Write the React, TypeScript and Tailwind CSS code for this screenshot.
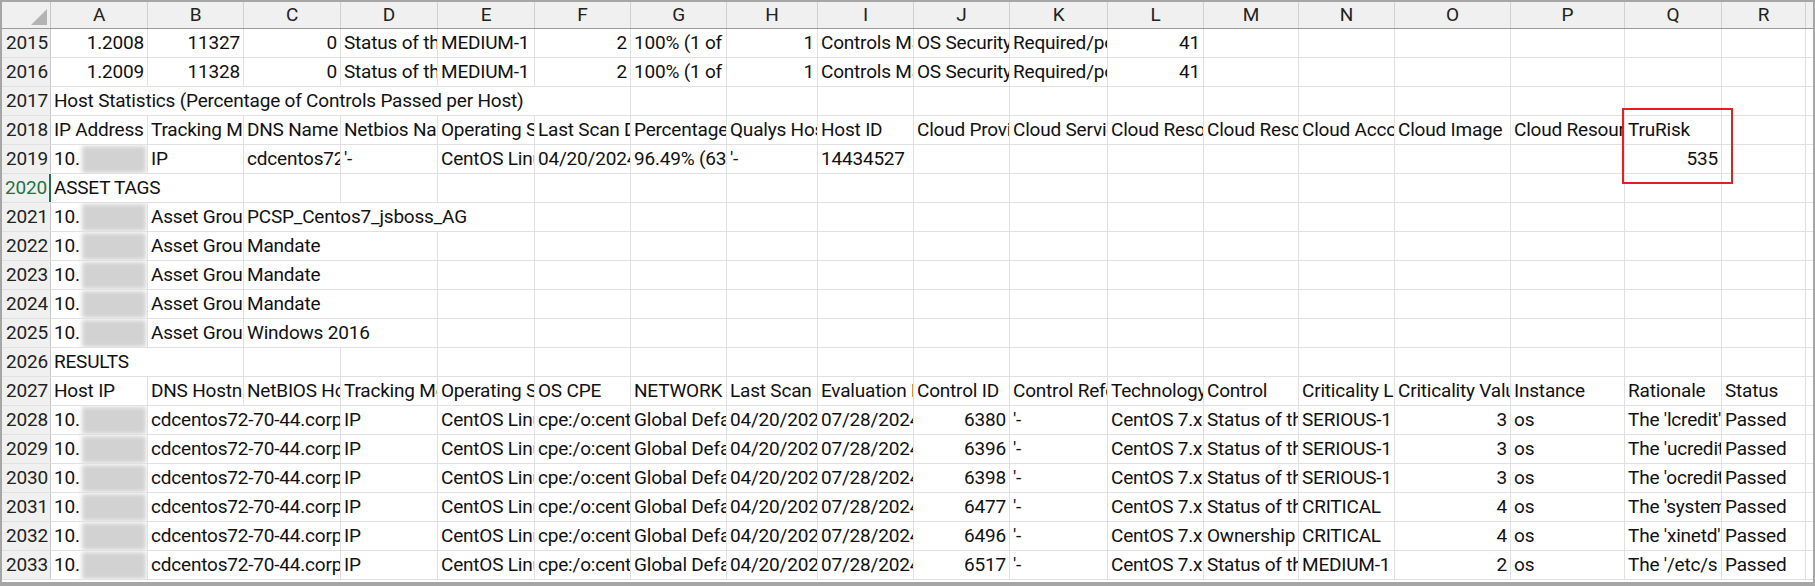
import React from "react";

const W = [97, 96, 97, 97, 97, 96, 96, 91, 96, 96, 98, 96, 95, 96, 116, 114, 97, 84];
const COLS = "ABCDEFGHIJKLMNOPQR".split("");

type C = { t?: string; r?: boolean; s?: number; ip?: boolean };
const L = (t: string, s = 1): C => ({ t, s });
const R = (t: string): C => ({ t, r: true });
const E: C = {};
const IP: C = { ip: true };

const fill = (cells: C[]) => {
  const used = cells.reduce((a, c) => a + (c.s || 1), 0);
  const out = [...cells];
  for (let i = used; i < 18; i++) out.push(E);
  return out;
};

const res = (cid: string, ctl: string, crit: string, cv: string, rat: string): C[] => [
  IP,
  L("cdcentos72-70-44.corp", 2),
  L("IP"),
  L("CentOS Linux 7"),
  L("cpe:/o:centos"),
  L("Global Default"),
  L("04/20/2024"),
  L("07/28/2024"),
  R(cid),
  L("'-"),
  L("CentOS 7.x"),
  L(ctl),
  L(crit),
  R(cv),
  L("os"),
  L(rat),
  L("Passed"),
];

const rows: [string, C[]][] = [
  ["2015", [R("1.2008"), R("11327"), R("0"), L("Status of the"), L("MEDIUM-1"), R("2"), L("100% (1 of 1)"), R("1"), L("Controls Mapped"), L("OS Security"), L("Required/policy"), R("41")]],
  ["2016", [R("1.2009"), R("11328"), R("0"), L("Status of the"), L("MEDIUM-1"), R("2"), L("100% (1 of 1)"), R("1"), L("Controls Mapped"), L("OS Security"), L("Required/policy"), R("41")]],
  ["2017", [L("Host Statistics (Percentage of Controls Passed per Host)", 6)]],
  ["2018", [L("IP Address"), L("Tracking Method"), L("DNS Name"), L("Netbios Name"), L("Operating System"), L("Last Scan Date"), L("Percentage"), L("Qualys Host ID"), L("Host ID"), L("Cloud Provider"), L("Cloud Service"), L("Cloud Resource"), L("Cloud Resource"), L("Cloud Account"), L("Cloud Image"), L("Cloud Resource"), L("TruRisk")]],
  ["2019", [IP, L("IP"), L("cdcentos72"), L("'-"), L("CentOS Linux"), L("04/20/2024"), L("96.49% (63 of)"), L("'-"), L("14434527"), E, E, E, E, E, E, E, R("535")]],
  ["2020", [L("ASSET TAGS", 2)]],
  ["2021", [IP, L("Asset Group"), L("PCSP_Centos7_jsboss_AG", 3)]],
  ["2022", [IP, L("Asset Group"), L("Mandate", 2)]],
  ["2023", [IP, L("Asset Group"), L("Mandate", 2)]],
  ["2024", [IP, L("Asset Group"), L("Mandate", 2)]],
  ["2025", [IP, L("Asset Group"), L("Windows 2016", 2)]],
  ["2026", [L("RESULTS", 2)]],
  ["2027", [L("Host IP"), L("DNS Hostname"), L("NetBIOS Hostname"), L("Tracking Method"), L("Operating System"), L("OS CPE"), L("NETWORK"), L("Last Scan Date"), L("Evaluation Date"), L("Control ID"), L("Control References"), L("Technology"), L("Control"), L("Criticality Label"), L("Criticality Value"), L("Instance"), L("Rationale"), L("Status")]],
  ["2028", res("6380", "Status of the", "SERIOUS-1", "3", "The 'lcredit'")],
  ["2029", res("6396", "Status of the", "SERIOUS-1", "3", "The 'ucredit'")],
  ["2030", res("6398", "Status of the", "SERIOUS-1", "3", "The 'ocredit'")],
  ["2031", res("6477", "Status of the", "CRITICAL", "4", "The 'systemd'")],
  ["2032", res("6496", "Ownership", "CRITICAL", "4", "The 'xinetd'")],
  ["2033", res("6517", "Status of the", "MEDIUM-1", "2", "The '/etc/s")],
];

export default function App() {
  const font = { fontFamily: "Roboto, 'Liberation Sans', sans-serif" };
  return (
    <div className="w-[1815px] h-[586px] bg-[#a6a6a6] p-[2px] pb-[4px] overflow-hidden" style={font}>
      <div className="relative bg-white h-full overflow-hidden text-[19px] text-[#111] tracking-[-0.2px]">
        <div className="flex h-[27px] bg-[#f0f0f0] border-b border-[#9a9a9a]">
          <div className="w-[49px] shrink-0 border-r border-[#c6c6c6] relative">
            <div className="absolute right-[3px] bottom-[3px] w-0 h-0 border-l-[16px] border-l-transparent border-b-[16px] border-b-[#b4b4b4]" />
          </div>
          {COLS.map((c, i) => (
            <div key={c} style={{ width: W[i] }} className="shrink-0 border-r border-[#d0d0d0] flex items-center justify-center text-[#222]">
              {c}
            </div>
          ))}
        </div>
        {rows.map(([n, cells]) => {
          const f = fill(cells);
          let col = 0;
          return (
            <div key={n} className="flex h-[29px] border-b border-[#e1e1e1]">
              <div className={`w-[49px] shrink-0 bg-[#f0f0f0] border-r flex items-center justify-end pr-[2px] ${n === "2020" ? "text-[#217346] border-r-2 border-r-[#217346]" : "text-[#222] border-[#c6c6c6]"}`}>
                {n}
              </div>
              {f.map((c, k) => {
                const s = c.s || 1;
                let w = 0;
                for (let j = 0; j < s; j++) w += W[col + j] || 0;
                col += s;
                if (col > 18) return null;
                return (
                  <div key={k} style={{ width: w }} className={`shrink-0 border-r border-[#e1e1e1] overflow-hidden whitespace-nowrap flex items-center px-[3px] ${c.r ? "justify-end" : ""}`}>
                    {c.ip ? (
                      <span className="flex items-center">
                        10.<span className="ml-[2px] inline-block w-[64px] h-[27px] bg-[#d2d2d2] blur-[2px]" />
                      </span>
                    ) : (
                      c.t
                    )}
                  </div>
                );
              })}
            </div>
          );
        })}
        <div className="absolute left-[1620px] top-[106px] w-[111px] h-[76px] border-2 border-[#e41f1f]" />
      </div>
    </div>
  );
}
